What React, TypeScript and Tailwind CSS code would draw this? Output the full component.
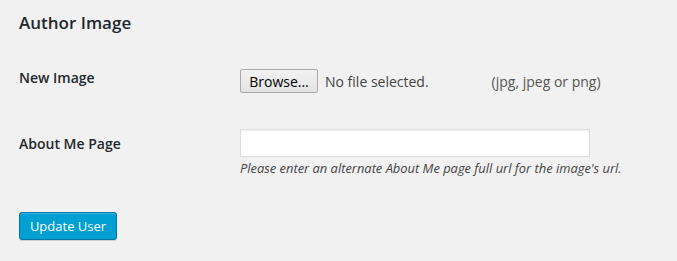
import React from "react";

export default function App(): React.JSX.Element {
  return (
    <div className="w-[677px] h-[261px] bg-[#f1f1f1] font-['Open_Sans',sans-serif] text-[#23282d] px-[19px] pt-[11px]">
      <h2 className="text-[17px] leading-[23px] font-semibold">Author Image</h2>

      <div className="flex mt-[34px]">
        <div className="w-[221px] shrink-0 text-[14px] leading-[18px] font-semibold pt-[1px]">
          New Image
        </div>
        <div className="flex items-center h-[24px] mt-[1px]">
          <button className="h-[24px] w-[78px] border border-[#a9a9a9] rounded-[2px] bg-gradient-to-b from-[#f2f2f2] to-[#e3e3e3] text-[14px] text-black font-['Open_Sans',sans-serif]">
            Browse...
          </button>
          <span className="ml-[7px] text-[14px] text-[#444]">No file selected.</span>
          <span className="ml-[63px] text-[14px] text-[#555]">(jpg, jpeg or png)</span>
        </div>
      </div>

      <div className="flex mt-[36px]">
        <div className="w-[221px] shrink-0 text-[14px] leading-[18px] font-semibold pt-[6px]">
          About Me Page
        </div>
        <div className="flex flex-col">
          <input
            type="text"
            className="w-[350px] h-[28px] bg-white border border-[#ddd] shadow-[inset_0_1px_2px_rgba(0,0,0,0.07)] outline-none"
          />
          <p className="mt-[2px] text-[12.9px] leading-[18px] italic text-[#444]">
            Please enter an alternate About Me page full url for the image's url.
          </p>
        </div>
      </div>

      <button className="mt-[35px] h-[28px] w-[98px] rounded-[3px] bg-[#00a0d2] border border-[#0073aa] text-white text-[13px] leading-[26px] shadow-[inset_0_1px_0_rgba(120,200,230,0.5),0_1px_0_rgba(0,0,0,0.15)] font-['Open_Sans',sans-serif]">
        Update User
      </button>
    </div>
  );
}
